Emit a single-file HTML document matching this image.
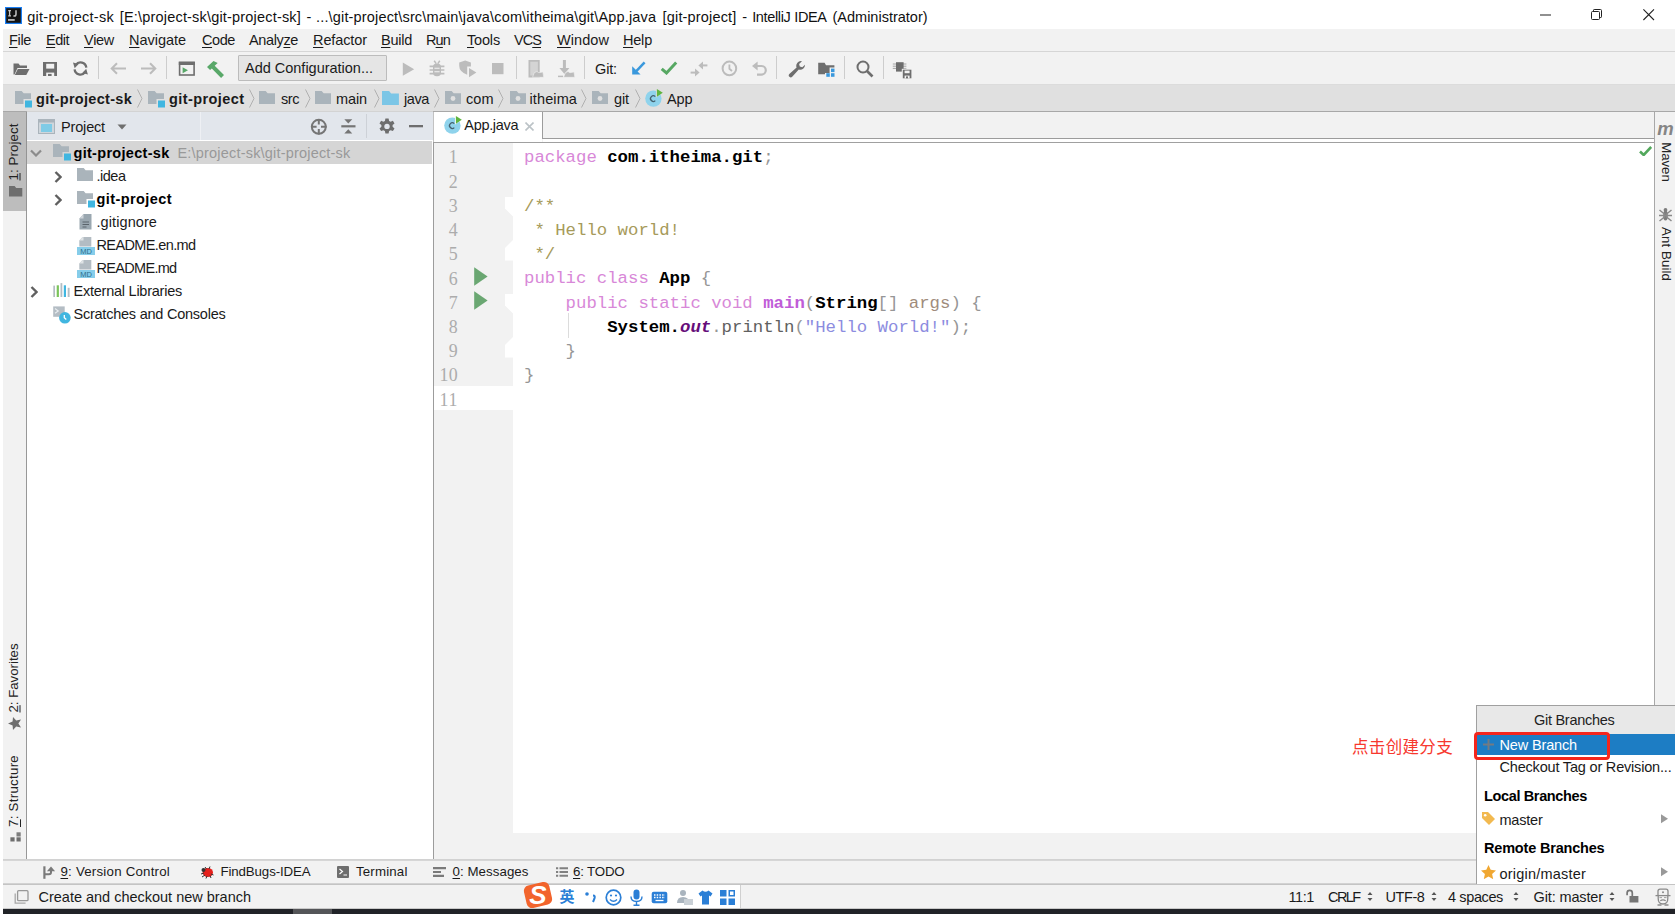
<!DOCTYPE html>
<html lang="zh"><head><meta charset="utf-8"><title>git-project-sk - IntelliJ IDEA</title>
<style>
html,body{margin:0;padding:0;}
body{width:1675px;height:914px;position:relative;overflow:hidden;background:#fff;font-family:'Liberation Sans','Noto Sans CJK SC',sans-serif;}
#app{position:absolute;left:0;top:0;width:1675px;height:914px;overflow:hidden;}
#app div,#app svg,#app span.t{position:absolute;display:block;}
#app div.sec{left:0;top:0;width:0;height:0;}
span.t{white-space:pre;line-height:20px;height:20px;}
u{text-decoration:underline;text-underline-offset:1.5px;text-decoration-thickness:1px;}
</style></head><body><div id="app">
<div class="sec" id="frame">
<div style="left:0px;top:0px;width:1675px;height:914px;background:#f2f2f2;"></div>
<div style="left:0px;top:0px;width:1675px;height:29px;background:#ffffff;"></div>
<div style="left:0px;top:0px;width:3px;height:914px;background:#ffffff;"></div>
<div style="left:3px;top:51px;width:1672px;height:1px;background:#d6d6d6;"></div>
<div style="left:3px;top:84px;width:1672px;height:1px;background:#dcdcdc;"></div>
<div style="left:3px;top:85px;width:1672px;height:26px;background:#e0e0e0;"></div>
<div style="left:3px;top:111px;width:1672px;height:1px;background:#a8a8a8;"></div>
<div style="left:27px;top:111px;width:406px;height:1px;background:#d3d3d3;"></div>
<div style="left:3px;top:112px;width:23px;height:748px;background:#f2f2f2;"></div>
<div style="left:3px;top:112px;width:23px;height:99px;background:#bdbdbd;"></div>
<div style="left:26px;top:112px;width:1px;height:748px;background:#989898;"></div>
<div style="left:26px;top:112px;width:1px;height:99px;background:#949494;"></div>
<div style="left:27px;top:112px;width:406px;height:28px;background:#e2e6ec;"></div>
<div style="left:200px;top:112px;width:1px;height:28px;background:#eef0f4;"></div>
<div style="left:27px;top:140px;width:406px;height:1px;background:#ffffff;"></div>
<div style="left:27px;top:141px;width:406px;height:719px;background:#ffffff;"></div>
<div style="left:27px;top:141px;width:406px;height:23px;background:#d5d5d5;"></div>
<div style="left:432px;top:141px;width:1px;height:23px;background:#ffffff;"></div>
<div style="left:433px;top:112px;width:1px;height:30px;background:#c2c2c2;"></div>
<div style="left:433px;top:142px;width:1px;height:718px;background:#9c9c9c;"></div>
<div style="left:434px;top:112px;width:1221px;height:27px;background:#f2f2f2;"></div>
<div style="left:434px;top:112px;width:108px;height:30px;background:#ffffff;"></div>
<div style="left:542px;top:112px;width:1px;height:27px;background:#9c9c9c;"></div>
<div style="left:542px;top:138px;width:1113px;height:1px;background:#9c9c9c;"></div>
<div style="left:543px;top:139px;width:1112px;height:3px;background:#ffffff;"></div>
<div style="left:434px;top:142px;width:1221px;height:1px;background:#a0a0a0;"></div>
<div style="left:434px;top:143px;width:79px;height:717px;background:#f2f2f2;"></div>
<div style="left:513px;top:143px;width:1141px;height:690px;background:#ffffff;"></div>
<div style="left:434px;top:386px;width:80px;height:24px;background:#ffffff;"></div>
<div style="left:1654px;top:112px;width:1px;height:748px;background:#a8a8a8;"></div>
<div style="left:1655px;top:112px;width:20px;height:748px;background:#f2f2f2;"></div>
<div style="left:3px;top:859px;width:1672px;height:1px;background:#d2d2d2;"></div>
<div style="left:3px;top:860px;width:1672px;height:1px;background:#d6d6d6;"></div>
<div style="left:3px;top:861px;width:1672px;height:22px;background:#f2f2f2;"></div>
<div style="left:3px;top:883px;width:1672px;height:1px;background:#d2d2d2;"></div>
<div style="left:3px;top:884px;width:1672px;height:1px;background:#c4c4c4;"></div>
<div style="left:3px;top:885px;width:1672px;height:24px;background:#f2f2f2;"></div>
<div style="left:3px;top:908px;width:1672px;height:1px;background:#c9c9c9;"></div>
<div style="left:3px;top:909px;width:1672px;height:5px;background:#212328;"></div>
<div style="left:293px;top:909px;width:39px;height:5px;background:#545558;"></div>
</div>
<div class="sec" id="titlebar">
<svg style="left:5px;top:7px;" width="17" height="17" viewBox="0 0 17 17"><rect width="17" height="17" fill="#1a7ff5"/><rect x="1.200" y="1.200" width="14.600" height="14.600" fill="#141414"/><rect x="3" y="12.200" width="6.700" height="1.500" fill="#d8d8d8"/><path d="M3.200 3.700h2.800M4.600 3.700v5.200M3.200 8.900h2.800" stroke="#c4c4c4" stroke-width="1.300" fill="none"/><path d="M11 3.200v4q0 1.800-1.700 1.800h-.9" stroke="#c4c4c4" stroke-width="1.500" fill="none"/></svg>
<span class="t" style="left:27.20px;top:6.50px;font-size:14.5px;color:#111;letter-spacing:0.271px;">git-project-sk</span>
<span class="t" style="left:119.80px;top:6.50px;font-size:14.5px;color:#111;letter-spacing:0.184px;">[E:\project-sk\git-project-sk]</span>
<span class="t" style="left:306.60px;top:6.50px;font-size:14.5px;color:#111;letter-spacing:-0.444px;">-</span>
<span class="t" style="left:316.00px;top:6.50px;font-size:14.5px;color:#111;letter-spacing:0.166px;">...\git-project\src\main\java\com\itheima\git\App.java</span>
<span class="t" style="left:662.60px;top:6.50px;font-size:14.5px;color:#111;letter-spacing:0.167px;">[git-project]</span>
<span class="t" style="left:742.20px;top:6.50px;font-size:14.5px;color:#111;letter-spacing:-0.544px;">-</span>
<span class="t" style="left:752.20px;top:6.50px;font-size:14.5px;color:#111;letter-spacing:-0.345px;">IntelliJ IDEA</span>
<span class="t" style="left:832.50px;top:6.50px;font-size:14.5px;color:#111;">(Administrator)</span>
<svg style="left:1540px;top:14px;" width="11" height="2" viewBox="0 0 11 2"><rect width="11" height="1" y="0.5" fill="#222"/></svg>
<svg style="left:1591px;top:9px;" width="11" height="11" viewBox="0 0 11 11"><path d="M2.500 2.500v-1.300q0-.700.700-.700h6.300q1 0 1 1v6.300q0 .700-.700.700h-1.300" fill="none" stroke="#222" stroke-width="1"/><rect x="0.500" y="2.500" width="8" height="8" rx="1" fill="none" stroke="#222" stroke-width="1"/></svg>
<svg style="left:1643px;top:9px;" width="11.5" height="11.5" viewBox="0 0 11.5 11.5"><path d="M0.400 0.400l10.600 10.600M11 0.400l-10.600 10.600" stroke="#222" stroke-width="1.100"/></svg>
</div>
<div class="sec" id="menubar">
<span class="t" style="left:9.00px;top:30.00px;font-size:14.5px;color:#1a1a1a;letter-spacing:-0.344px;"><u>F</u>ile</span>
<span class="t" style="left:46.00px;top:30.00px;font-size:14.5px;color:#1a1a1a;letter-spacing:-0.500px;"><u>E</u>dit</span>
<span class="t" style="left:84.00px;top:30.00px;font-size:14.5px;color:#1a1a1a;letter-spacing:-0.293px;"><u>V</u>iew</span>
<span class="t" style="left:129.00px;top:30.00px;font-size:14.5px;color:#1a1a1a;letter-spacing:-0.029px;"><u>N</u>avigate</span>
<span class="t" style="left:202.00px;top:30.00px;font-size:14.5px;color:#1a1a1a;letter-spacing:-0.418px;"><u>C</u>ode</span>
<span class="t" style="left:249.00px;top:30.00px;font-size:14.5px;color:#1a1a1a;letter-spacing:-0.371px;">Analy<u>z</u>e</span>
<span class="t" style="left:313.00px;top:30.00px;font-size:14.5px;color:#1a1a1a;letter-spacing:-0.102px;"><u>R</u>efactor</span>
<span class="t" style="left:381.00px;top:30.00px;font-size:14.5px;color:#1a1a1a;letter-spacing:-0.250px;"><u>B</u>uild</span>
<span class="t" style="left:426.00px;top:30.00px;font-size:14.5px;color:#1a1a1a;letter-spacing:-0.870px;">R<u>u</u>n</span>
<span class="t" style="left:467.00px;top:30.00px;font-size:14.5px;color:#1a1a1a;letter-spacing:-0.172px;"><u>T</u>ools</span>
<span class="t" style="left:514.00px;top:30.00px;font-size:14.5px;color:#1a1a1a;letter-spacing:-0.943px;">VC<u>S</u></span>
<span class="t" style="left:557.00px;top:30.00px;font-size:14.5px;color:#1a1a1a;letter-spacing:0.070px;"><u>W</u>indow</span>
<span class="t" style="left:623.00px;top:30.00px;font-size:14.5px;color:#1a1a1a;letter-spacing:-0.207px;"><u>H</u>elp</span>
</div>
<div class="sec" id="toolbar">
<svg style="left:13px;top:61px;" width="17" height="15" viewBox="0 0 17 15"><path d="M0.5 2.5h5l1.5 2h7v2.5h-9.5l-3 6.5h-1z" fill="#6e6e6e"/><path d="M4.8 8h11.7l-3.2 6h-11.5z" fill="#6e6e6e"/></svg>
<svg style="left:43px;top:61.5px;" width="14" height="14.5" viewBox="0 0 14 14.5"><rect width="14" height="14.200" fill="#6e6e6e"/><rect x="3.200" y="1.800" width="8" height="4.800" fill="#f2f2f2"/><rect x="3.200" y="10.600" width="8" height="3.600" fill="#f2f2f2"/><rect x="5" y="11.900" width="3.600" height="2.300" fill="#6e6e6e"/></svg>
<svg style="left:72px;top:60px;" width="17" height="17" viewBox="0 0 17 17"><path d="M14.300 7.600A5.800 5.800 0 0 0 3.800 4.900" fill="none" stroke="#6e6e6e" stroke-width="2.300"/><path d="M1 2.600l5.600 1.300-3.900 4.300z" fill="#6e6e6e"/><path d="M2.600 9.400A5.800 5.800 0 0 0 13.100 12.100" fill="none" stroke="#6e6e6e" stroke-width="2.300"/><path d="M15.900 14.400l-5.600-1.300 3.900-4.300z" fill="#6e6e6e"/></svg>
<div style="left:98px;top:56px;width:1px;height:23px;background:#cdcdcd;"></div>
<svg style="left:110px;top:62px;" width="17" height="13" viewBox="0 0 17 13"><path d="M16 6.500h-14M7 1.200l-5.300 5.300 5.300 5.300" fill="none" stroke="#bcbcbc" stroke-width="2"/></svg>
<svg style="left:140px;top:62px;" width="17" height="13" viewBox="0 0 17 13"><path d="M1 6.500h14M10 1.200l5.300 5.300-5.300 5.300" fill="none" stroke="#bcbcbc" stroke-width="2"/></svg>
<div style="left:166px;top:56px;width:1px;height:23px;background:#cdcdcd;"></div>
<svg style="left:178px;top:61px;" width="18" height="15" viewBox="0 0 18 15"><rect x="1.600" y="1.500" width="14.500" height="12.500" fill="none" stroke="#6e6e6e" stroke-width="1.600"/><rect x="0.800" y="0.700" width="16.100" height="3.300" fill="#6e6e6e"/><path d="M4.600 6.300l5.400 3-5.400 3z" fill="#59a869"/></svg>
<svg style="left:206px;top:60px;" width="20" height="18" viewBox="0 0 20 18"><path d="M1 7l6.500-6 4.200 2-3 2.800 9.300 9.300-2.900 2.800-9.300-9.400-1.700 1.500z" fill="#59a869"/></svg>
<div style="left:238px;top:55px;width:149px;height:26px;background:#e5e5e5;border:1px solid #bcbcbc;box-sizing:border-box;border-radius:1px;"></div>
<span class="t" style="left:245.00px;top:58.00px;font-size:14.5px;color:#1a1a1a;letter-spacing:-0.009px;">Add Configuration...</span>
<svg style="left:402px;top:61.5px;" width="13" height="14.5" viewBox="0 0 13 14.5"><path d="M0.800 0.600l11.400 6.600-11.400 6.600z" fill="#bcbcbc"/></svg>
<svg style="left:429px;top:60px;" width="16" height="18" viewBox="0 0 16 18"><rect x="4" y="3.600" width="8" height="12.600" rx="3.600" fill="#bcbcbc"/><path d="M0.600 6.400h14.800M0.600 10h14.800M0.600 13.600h14.800" stroke="#bcbcbc" stroke-width="1.600"/><path d="M5.200 0.800l2 2.800M10.800 0.800l-2 2.800" stroke="#bcbcbc" stroke-width="1.500"/><path d="M5.400 8.200h5.200M5.400 11.800h5.200" stroke="#f2f2f2" stroke-width="1.100"/></svg>
<svg style="left:459px;top:60px;" width="18" height="18" viewBox="0 0 18 18"><path d="M0.200 2.400l6-1.800 5.700 1.800v4.200h-3.700v8.200q-8-3-8-9z" fill="#bcbcbc"/><path d="M10 8l7.400 4.600-7.400 4.700z" fill="#bcbcbc"/></svg>
<svg style="left:492px;top:63px;" width="12" height="12" viewBox="0 0 12 12"><rect width="11.500" height="11.200" fill="#bcbcbc"/></svg>
<div style="left:516px;top:56px;width:1px;height:23px;background:#cdcdcd;"></div>
<svg style="left:528px;top:60px;" width="16" height="18" viewBox="0 0 16 18"><path d="M1.400 0.900h9.400v15.600h-9.400z" fill="#d4d4d4" stroke="#bcbcbc" stroke-width="1.800"/><path d="M4.500 17.300l1.800-4.600 2.600-1.200 2 1.200 4-.8.800 5.400z" fill="#bcbcbc" stroke="#f2f2f2" stroke-width="0.600"/></svg>
<svg style="left:557px;top:60px;" width="19" height="18" viewBox="0 0 19 18"><path d="M7.400 0v11" stroke="#bcbcbc" stroke-width="3"/><path d="M2.400 8l5 6 5-6z" fill="#bcbcbc"/><path d="M1 16.400h5" stroke="#bcbcbc" stroke-width="1.500"/><path d="M6.600 17.300l1.800-4.600 2.600-1.200 2 1.200 4-.8.800 5.400z" fill="#bcbcbc" stroke="#f2f2f2" stroke-width="0.600"/></svg>
<div style="left:584px;top:56px;width:1px;height:23px;background:#cdcdcd;"></div>
<span class="t" style="left:595.00px;top:58.50px;font-size:14.5px;color:#1a1a1a;letter-spacing:-0.141px;">Git:</span>
<svg style="left:631px;top:61px;" width="15" height="15" viewBox="0 0 15 15"><path d="M13.600 1.400l-9 9.400" fill="none" stroke="#3a98dc" stroke-width="2.500"/><path d="M1.200 5.200v8.400h8.400z" fill="#3a98dc"/></svg>
<svg style="left:660px;top:61px;" width="18" height="14" viewBox="0 0 18 14"><path d="M1.700 7.800l4.800 4.200 9.700-10.400" fill="none" stroke="#57a863" stroke-width="3"/></svg>
<svg style="left:690px;top:60px;" width="18" height="18" viewBox="0 0 18 18"><path d="M0.600 12.600h6.500" stroke="#bcbcbc" stroke-width="2"/><path d="M5 8.600l4.600 4-4.600 4z" fill="#bcbcbc"/><path d="M17.400 5.400h-6.500" stroke="#bcbcbc" stroke-width="2"/><path d="M13 1.400l-4.600 4 4.600 4z" fill="#bcbcbc"/></svg>
<svg style="left:721px;top:60px;" width="17" height="17" viewBox="0 0 17 17"><circle cx="8.400" cy="8.400" r="6.800" fill="none" stroke="#bcbcbc" stroke-width="2"/><path d="M8.400 4.600v4.200l2.600 2.200" fill="none" stroke="#bcbcbc" stroke-width="1.800"/></svg>
<svg style="left:751px;top:60px;" width="17" height="17" viewBox="0 0 17 17"><path d="M4 6h6.500a4.300 4.300 0 0 1 0 8.600h-4.500" fill="none" stroke="#bcbcbc" stroke-width="2.200"/><path d="M6.600 1.400l-5.600 4.600 5.600 4.600z" fill="#bcbcbc"/></svg>
<div style="left:776px;top:56px;width:1px;height:23px;background:#cdcdcd;"></div>
<svg style="left:788px;top:60px;" width="18" height="18" viewBox="0 0 18 18"><path d="M17 4.800a4.700 4.700 0 0 1-6.200 4.700l-6.600 7.200a1.900 1.900 0 0 1-2.900-2.600l7.300-6.600a4.700 4.700 0 0 1 5.400-6.300l-2.900 2.900.700 2.500 2.500.700z" fill="#6e6e6e"/></svg>
<svg style="left:818px;top:61px;" width="18" height="17" viewBox="0 0 18 17"><path d="M0.200 1.800h6.400l1.400 2.400h8.400v9h-16.200z" fill="#6e6e6e"/><path d="M11.600 6.400h6v11h-10.600v-5.400h4.600z" fill="#f2f2f2"/><rect x="13" y="7.600" width="3.500" height="3.500" fill="#3a98dc"/><rect x="8.300" y="12.200" width="3.500" height="3.600" fill="#3a98dc"/><rect x="13" y="12.200" width="3.500" height="3.600" fill="#3a98dc"/></svg>
<div style="left:844px;top:56px;width:1px;height:23px;background:#cdcdcd;"></div>
<svg style="left:856px;top:60px;" width="18" height="18" viewBox="0 0 18 18"><circle cx="7" cy="7" r="5.5" fill="none" stroke="#6e6e6e" stroke-width="2"/><path d="M11 11l5.5 5.5" stroke="#6e6e6e" stroke-width="2.6"/></svg>
<div style="left:883px;top:56px;width:1px;height:23px;background:#cdcdcd;"></div>
<svg style="left:892.2px;top:59.5px;" width="20" height="19" viewBox="0 0 20 19"><rect x="4" y="2.200" width="7.600" height="9.400" fill="#6e6e6e"/><path d="M0.800 4h13.600M0.800 6.200h13.600M0.800 8.400h13.600" stroke="#6e6e6e" stroke-width="0.900" opacity="0.650"/><path d="M9.800 8.800h10v10h-10z" fill="#f2f2f2"/><path d="M10.800 9.700h8.600v8.600h-8.600z" fill="#6e6e6e"/><rect x="12.600" y="10.600" width="5" height="2.600" fill="#f2f2f2"/><rect x="12.600" y="15.600" width="5" height="2.700" fill="#f2f2f2"/><rect x="14" y="16.400" width="2" height="1.900" fill="#6e6e6e"/></svg>
</div>
<div class="sec" id="navbar">
<svg style="left:15px;top:91px;" width="18" height="17" viewBox="0 0 18 17"><path d="M0 0h6.7l1.9 2.3h7.4v10.7h-16z" fill="#aab4bb" transform="translate(0,0)"/><rect x="8.5" y="8" width="9" height="9" fill="#e0e0e0"/><rect x="10" y="9.5" width="7" height="7" fill="#40b6e0"/></svg>
<span class="t" style="left:36.00px;top:88.50px;font-size:14.5px;color:#1a1a1a;font-weight:700;letter-spacing:0.297px;">git-project-sk</span>
<svg style="left:148px;top:91px;" width="18" height="17" viewBox="0 0 18 17"><path d="M0 0h6.7l1.9 2.3h7.4v10.7h-16z" fill="#aab4bb" transform="translate(0,0)"/><rect x="8.5" y="8" width="9" height="9" fill="#e0e0e0"/><rect x="10" y="9.5" width="7" height="7" fill="#40b6e0"/></svg>
<span class="t" style="left:169.00px;top:88.50px;font-size:14.5px;color:#1a1a1a;font-weight:700;letter-spacing:0.419px;">git-project</span>
<svg style="left:259px;top:91px;" width="16" height="13" viewBox="0 0 16 13"><path d="M0 0h6.7l1.9 2.3h7.4v10.7h-16z" fill="#aab4bb" transform="translate(0,0)"/></svg>
<span class="t" style="left:281.00px;top:88.50px;font-size:14.5px;color:#1a1a1a;letter-spacing:-0.448px;">src</span>
<svg style="left:315px;top:91px;" width="16" height="13" viewBox="0 0 16 13"><path d="M0 0h6.7l1.9 2.3h7.4v10.7h-16z" fill="#aab4bb" transform="translate(0,0)"/></svg>
<span class="t" style="left:336.00px;top:88.50px;font-size:14.5px;color:#1a1a1a;letter-spacing:-0.109px;">main</span>
<svg style="left:382px;top:91px;" width="17" height="14" viewBox="0 0 17 14"><path d="M0 0h7.1l2.0 2.5h7.8v11.5h-17z" fill="#7cc6e6" transform="translate(0,0)"/></svg>
<span class="t" style="left:404.00px;top:88.50px;font-size:14.5px;color:#1a1a1a;letter-spacing:-0.402px;">java</span>
<svg style="left:444.5px;top:91px;" width="16" height="13" viewBox="0 0 16 13"><path d="M0 0h6.7l1.9 2.3h7.4v10.7h-16z" fill="#aab4bb" transform="translate(0,0)"/><circle cx="8" cy="7.5" r="2.4" fill="#e0e0e0"/></svg>
<span class="t" style="left:466.00px;top:88.50px;font-size:14.5px;color:#1a1a1a;letter-spacing:0.031px;">com</span>
<svg style="left:510px;top:91px;" width="16" height="13" viewBox="0 0 16 13"><path d="M0 0h6.7l1.9 2.3h7.4v10.7h-16z" fill="#aab4bb" transform="translate(0,0)"/><circle cx="8" cy="7.5" r="2.4" fill="#e0e0e0"/></svg>
<span class="t" style="left:529.50px;top:88.50px;font-size:14.5px;color:#1a1a1a;letter-spacing:0.107px;">itheima</span>
<svg style="left:592px;top:91px;" width="16" height="13" viewBox="0 0 16 13"><path d="M0 0h6.7l1.9 2.3h7.4v10.7h-16z" fill="#aab4bb" transform="translate(0,0)"/><circle cx="8" cy="7.5" r="2.4" fill="#e0e0e0"/></svg>
<span class="t" style="left:614.00px;top:88.50px;font-size:14.5px;color:#1a1a1a;letter-spacing:-0.109px;">git</span>
<svg style="left:645px;top:89px;" width="19" height="18" viewBox="0 0 19 18"><circle cx="8.4" cy="9.6" r="8.2" fill="#8fd3ec"/><path d="M10.3 11.6a2.8 2.8 0 1 1 0-4" fill="none" stroke="#46626f" stroke-width="1.3"/><path d="M11 -1l7.600 4.600-7.600 5z" fill="#e0e0e0"/><path d="M11.900 0l5.900 3.700-5.900 4z" fill="#5fb540"/></svg>
<span class="t" style="left:667.00px;top:88.50px;font-size:14.5px;color:#1a1a1a;letter-spacing:-0.104px;">App</span>
<svg style="left:135.5px;top:89px;" width="8" height="19" viewBox="0 0 8 19"><path d="M1.5 0.5l4.5 9-4.5 9" fill="none" stroke="#b0b0b0" stroke-width="1"/></svg>
<svg style="left:248px;top:89px;" width="8" height="19" viewBox="0 0 8 19"><path d="M1.5 0.5l4.5 9-4.5 9" fill="none" stroke="#b0b0b0" stroke-width="1"/></svg>
<svg style="left:303.5px;top:89px;" width="8" height="19" viewBox="0 0 8 19"><path d="M1.5 0.5l4.5 9-4.5 9" fill="none" stroke="#b0b0b0" stroke-width="1"/></svg>
<svg style="left:372.5px;top:89px;" width="8" height="19" viewBox="0 0 8 19"><path d="M1.5 0.5l4.5 9-4.5 9" fill="none" stroke="#b0b0b0" stroke-width="1"/></svg>
<svg style="left:433px;top:89px;" width="8" height="19" viewBox="0 0 8 19"><path d="M1.5 0.5l4.5 9-4.5 9" fill="none" stroke="#b0b0b0" stroke-width="1"/></svg>
<svg style="left:497px;top:89px;" width="8" height="19" viewBox="0 0 8 19"><path d="M1.5 0.5l4.5 9-4.5 9" fill="none" stroke="#b0b0b0" stroke-width="1"/></svg>
<svg style="left:580px;top:89px;" width="8" height="19" viewBox="0 0 8 19"><path d="M1.5 0.5l4.5 9-4.5 9" fill="none" stroke="#b0b0b0" stroke-width="1"/></svg>
<svg style="left:634px;top:89px;" width="8" height="19" viewBox="0 0 8 19"><path d="M1.5 0.5l4.5 9-4.5 9" fill="none" stroke="#b0b0b0" stroke-width="1"/></svg>
</div>
<div class="sec" id="left-stripe">
<div style="left:-14.80px;top:141.50px;width:57.00px;height:20px;line-height:20px;font-size:13.3px;color:#222;white-space:pre;letter-spacing:0.083px;transform:rotate(-90deg);"><u>1</u>: Project</div>
<svg style="left:8.5px;top:186px;" width="14" height="11" viewBox="0 0 14 11"><path d="M0 0h5.6l1.6 1.9h6.1v8.6h-13.3z" fill="#6e6e6e" transform="translate(0,0)"/></svg>
<div style="left:-20.80px;top:667.50px;width:69.00px;height:20px;line-height:20px;font-size:13.3px;color:#222;white-space:pre;letter-spacing:-0.039px;transform:rotate(-90deg);"><u>2</u>: Favorites</div>
<svg style="left:8px;top:717px;" width="13" height="13" viewBox="0 0 13 13"><path d="M6.5 0l1.9 4.6 4.6.4-3.5 3.2 1.1 4.8-4.1-2.6-4.1 2.6 1.1-4.8-3.5-3.200 4.600-.4z" fill="#6e6e6e" transform="rotate(-90 6.5 6.5)"/></svg>
<div style="left:-22.30px;top:781.00px;width:72.00px;height:20px;line-height:20px;font-size:13.3px;color:#222;white-space:pre;letter-spacing:0.272px;transform:rotate(-90deg);"><u>7</u>: Structure</div>
<svg style="left:9.5px;top:832px;" width="11" height="10" viewBox="0 0 11 10"><rect x="6.500" y="0.300" width="4.200" height="4.200" fill="#7d7d7d"/><rect x="0.400" y="5.300" width="4.200" height="4.200" fill="#6e6e6e"/><rect x="6.500" y="5.300" width="4.200" height="4.200" fill="#6e6e6e"/></svg>
</div>
<div class="sec" id="project-header">
<svg style="left:38px;top:119px;" width="17" height="15" viewBox="0 0 17 15"><rect x="0.5" y="0.5" width="16" height="14" fill="#cfd6dc" stroke="#aab4bc"/><rect x="0.5" y="0.5" width="16" height="3" fill="#aab4bc"/><rect x="3" y="5" width="11" height="8" fill="#7fcbe6"/></svg>
<span class="t" style="left:61.00px;top:116.50px;font-size:14.5px;color:#1a1a1a;letter-spacing:-0.163px;">Project</span>
<svg style="left:116.5px;top:124px;" width="10" height="6" viewBox="0 0 10 6"><path d="M0.5 0.5h9l-4.500 5z" fill="#6e6e6e"/></svg>
<svg style="left:310px;top:117.5px;" width="17.5" height="17.5" viewBox="0 0 17.5 17.5"><circle cx="8.800" cy="8.800" r="7" fill="none" stroke="#757575" stroke-width="2"/><path d="M8.800 1v5.600M8.800 11v5.600M1 8.800h5.600M11 8.800h5.600" stroke="#757575" stroke-width="2"/></svg>
<svg style="left:341px;top:118px;" width="15" height="17" viewBox="0 0 15 17"><path d="M0.300 8.300h14.200" stroke="#757575" stroke-width="2.200"/><path d="M3.300 1.200h8l-4 4.400zM3.300 15.600h8l-4-4.400z" fill="#757575"/></svg>
<div style="left:366px;top:114px;width:1px;height:24px;background:#cdd1d7;"></div>
<svg style="left:379px;top:118px;" width="16" height="17" viewBox="0 0 16 17"><path d="M6.400 0.500h3.200l.5 2.400 1.500.800 2.300-.900 1.600 2.700-1.900 1.600v1.700l1.900 1.600-1.600 2.700-2.300-.900-1.500.800-.5 2.400h-3.200l-.5-2.400-1.500-.800-2.300.900-1.600-2.700 1.900-1.600v-1.700l-1.900-1.600 1.600-2.700 2.300.900 1.500-.800z" fill="#6e6e6e"/><circle cx="8" cy="8.400" r="2.700" fill="#e2e6ec"/></svg>
<svg style="left:409px;top:124.6px;" width="14" height="3" viewBox="0 0 14 3"><rect width="14" height="2.300" fill="#6e6e6e"/></svg>
</div>
<div class="sec" id="project-tree">
<svg style="left:30px;top:149px;" width="12" height="8" viewBox="0 0 12 8"><path d="M1 1.500l5 5 5-5" fill="none" stroke="#8c8c8c" stroke-width="2.200"/></svg>
<svg style="left:53px;top:144px;" width="18" height="17" viewBox="0 0 18 17"><path d="M0 0h6.7l1.9 2.3h7.4v10.7h-16z" fill="#aab4bb" transform="translate(0,0)"/><rect x="9.500" y="8" width="8.5" height="9" fill="#d5d5d5"/><rect x="11" y="9.500" width="7" height="7" fill="#40b6e0"/></svg>
<span class="t" style="left:73.50px;top:142.50px;font-size:14.5px;color:#000;font-weight:700;letter-spacing:0.297px;">git-project-sk</span>
<span class="t" style="left:177.50px;top:142.50px;font-size:14.5px;color:#999;letter-spacing:0.193px;">E:\project-sk\git-project-sk</span>
<svg style="left:54px;top:170.6px;" width="8" height="12" viewBox="0 0 8 12"><path d="M1.500 1l5 5-5 5" fill="none" stroke="#606060" stroke-width="2.400"/></svg>
<svg style="left:77px;top:168px;" width="16" height="13" viewBox="0 0 16 13"><path d="M0 0h6.7l1.9 2.3h7.4v10.7h-16z" fill="#aab4bb" transform="translate(0,0)"/></svg>
<span class="t" style="left:96.50px;top:165.50px;font-size:14.5px;color:#1a1a1a;letter-spacing:-0.491px;">.idea</span>
<svg style="left:54px;top:193.6px;" width="8" height="12" viewBox="0 0 8 12"><path d="M1.500 1l5 5-5 5" fill="none" stroke="#606060" stroke-width="2.400"/></svg>
<svg style="left:77px;top:191px;" width="18" height="17" viewBox="0 0 18 17"><path d="M0 0h6.7l1.9 2.3h7.4v10.7h-16z" fill="#aab4bb" transform="translate(0,0)"/><rect x="9.500" y="8" width="8.500" height="9" fill="#fff"/><rect x="11" y="9.500" width="7" height="7" fill="#40b6e0"/></svg>
<span class="t" style="left:96.50px;top:188.50px;font-size:14.5px;color:#000;font-weight:700;letter-spacing:0.419px;">git-project</span>
<svg style="left:79px;top:214px;" width="13" height="16" viewBox="0 0 13 16"><path d="M4.500 0h8v15.500h-12v-11z" fill="#9aa7b0"/><path d="M0.500 4.500l4-4.500v4.500z" fill="#cfd5da"/><path d="M3.500 8h6.500M3.500 10.500h6.500M3.500 13h4" stroke="#5a646c" stroke-width="1"/></svg>
<span class="t" style="left:96.50px;top:211.50px;font-size:14.5px;color:#1a1a1a;letter-spacing:0.084px;">.gitignore</span>
<svg style="left:77px;top:237px;" width="18" height="18" viewBox="0 0 18 18"><path d="M6.500 -1h7.800v10.500h-12v-6z" fill="#b3bcc3"/><path d="M2.300 3.500l4.200-4.500v4.500z" fill="#dfe3e6"/><rect x="0" y="10" width="18" height="8.200" fill="#86cdea"/><text x="9" y="17" font-size="7.500" font-weight="400" text-anchor="middle" fill="#2f6f8c" font-family="Liberation Sans,sans-serif">MD</text></svg>
<span class="t" style="left:96.50px;top:234.50px;font-size:14.5px;color:#1a1a1a;letter-spacing:-0.615px;">README.en.md</span>
<svg style="left:77px;top:260px;" width="18" height="18" viewBox="0 0 18 18"><path d="M6.500 -1h7.800v10.500h-12v-6z" fill="#b3bcc3"/><path d="M2.300 3.500l4.200-4.500v4.500z" fill="#dfe3e6"/><rect x="0" y="10" width="18" height="8.200" fill="#86cdea"/><text x="9" y="17" font-size="7.500" font-weight="400" text-anchor="middle" fill="#2f6f8c" font-family="Liberation Sans,sans-serif">MD</text></svg>
<span class="t" style="left:96.50px;top:257.50px;font-size:14.5px;color:#1a1a1a;letter-spacing:-0.691px;">README.md</span>
<svg style="left:30.3px;top:285.6px;" width="8" height="12" viewBox="0 0 8 12"><path d="M1.500 1l5 5-5 5" fill="none" stroke="#606060" stroke-width="2.400"/></svg>
<svg style="left:53px;top:283px;" width="17" height="14.5" viewBox="0 0 17 14.5"><rect x="0.300" y="2.600" width="1.700" height="11.400" fill="#b4bdc3"/><rect x="3.700" y="2.300" width="2.200" height="11.700" fill="#7bc45a"/><rect x="7.500" y="0.100" width="1.800" height="13.900" fill="#b4bdc3"/><rect x="10.800" y="2.300" width="2.200" height="11.700" fill="#40b6e0"/><rect x="14.700" y="4.800" width="1.900" height="9.200" fill="#b4bdc3"/></svg>
<span class="t" style="left:73.50px;top:280.50px;font-size:14.5px;color:#1a1a1a;letter-spacing:-0.240px;">External Libraries</span>
<svg style="left:53px;top:306px;" width="18" height="18" viewBox="0 0 18 18"><path d="M0.200 0.400h11.500v10.400h-11.500z" fill="#b4bdc4"/><path d="M2 2.600l3.200 2.300-3.200 2.300" fill="none" stroke="#e8ecef" stroke-width="1.200"/><circle cx="11.900" cy="11.800" r="5.800" fill="#40b6e0"/><path d="M11.300 9v2.800l2 1.800" fill="none" stroke="#fff" stroke-width="1.300"/></svg>
<span class="t" style="left:73.50px;top:303.50px;font-size:14.5px;color:#1a1a1a;letter-spacing:-0.235px;">Scratches and Consoles</span>
</div>
<div class="sec" id="editor-tabs">
<svg style="left:444.4px;top:116px;" width="19" height="18" viewBox="0 0 19 18"><circle cx="8.4" cy="9.6" r="8.2" fill="#8fd3ec"/><path d="M10.3 11.6a2.8 2.8 0 1 1 0-4" fill="none" stroke="#46626f" stroke-width="1.3"/><path d="M11 -1l7.600 4.600-7.600 5z" fill="#fff"/><path d="M11.900 0l5.900 3.700-5.900 4z" fill="#5fb540"/></svg>
<span class="t" style="left:464.30px;top:114.70px;font-size:14.5px;color:#1a1a1a;letter-spacing:-0.317px;">App.java</span>
<svg style="left:525.2px;top:121.8px;" width="9" height="9" viewBox="0 0 9 9"><path d="M0.500 0.500l8 8M8.500 0.500l-8 8" stroke="#bcc3c7" stroke-width="1.600"/></svg>
</div>
<div class="sec" id="editor">
<span class="t" style="left:448.80px;top:147.30px;font-size:17.9px;color:#acacac;font-family:'Liberation Serif',serif;letter-spacing:0.347px;">1</span>
<span class="t" style="left:448.80px;top:171.54px;font-size:17.9px;color:#acacac;font-family:'Liberation Serif',serif;letter-spacing:0.347px;">2</span>
<span class="t" style="left:448.80px;top:195.78px;font-size:17.9px;color:#acacac;font-family:'Liberation Serif',serif;letter-spacing:0.347px;">3</span>
<span class="t" style="left:448.80px;top:220.02px;font-size:17.9px;color:#acacac;font-family:'Liberation Serif',serif;letter-spacing:0.347px;">4</span>
<span class="t" style="left:448.80px;top:244.26px;font-size:17.9px;color:#acacac;font-family:'Liberation Serif',serif;letter-spacing:0.347px;">5</span>
<span class="t" style="left:448.80px;top:268.50px;font-size:17.9px;color:#acacac;font-family:'Liberation Serif',serif;letter-spacing:0.347px;">6</span>
<span class="t" style="left:448.80px;top:292.74px;font-size:17.9px;color:#acacac;font-family:'Liberation Serif',serif;letter-spacing:0.347px;">7</span>
<span class="t" style="left:448.80px;top:316.98px;font-size:17.9px;color:#acacac;font-family:'Liberation Serif',serif;letter-spacing:0.347px;">8</span>
<span class="t" style="left:448.80px;top:341.22px;font-size:17.9px;color:#acacac;font-family:'Liberation Serif',serif;letter-spacing:0.347px;">9</span>
<span class="t" style="left:439.50px;top:365.46px;font-size:17.9px;color:#acacac;font-family:'Liberation Serif',serif;letter-spacing:0.355px;">10</span>
<span class="t" style="left:439.50px;top:389.70px;font-size:17.9px;color:#acacac;font-family:'Liberation Serif',serif;letter-spacing:0.683px;">11</span>
<span class="t" style="left:524.00px;top:148.20px;font-size:17.33px;color:#d888d8;font-family:'Liberation Mono','Noto Sans CJK SC',monospace;">package</span>
<span class="t" style="left:607.20px;top:148.20px;font-size:17.33px;color:#000;font-weight:700;font-family:'Liberation Mono','Noto Sans CJK SC',monospace;">com.itheima.git</span>
<span class="t" style="left:763.20px;top:148.20px;font-size:17.33px;color:#969696;font-family:'Liberation Mono','Noto Sans CJK SC',monospace;letter-spacing:-0.006px;">;</span>
<span class="t" style="left:524.00px;top:196.68px;font-size:17.33px;color:#a69a5a;font-family:'Liberation Mono','Noto Sans CJK SC',monospace;">/**</span>
<span class="t" style="left:524.00px;top:220.92px;font-size:17.33px;color:#a69a5a;font-family:'Liberation Mono','Noto Sans CJK SC',monospace;"> * Hello world!</span>
<span class="t" style="left:524.00px;top:245.16px;font-size:17.33px;color:#a69a5a;font-family:'Liberation Mono','Noto Sans CJK SC',monospace;"> */</span>
<span class="t" style="left:524.00px;top:269.40px;font-size:17.33px;color:#d888d8;font-family:'Liberation Mono','Noto Sans CJK SC',monospace;">public class</span>
<span class="t" style="left:659.20px;top:269.40px;font-size:17.33px;color:#000;font-weight:700;font-family:'Liberation Mono','Noto Sans CJK SC',monospace;">App</span>
<span class="t" style="left:700.80px;top:269.40px;font-size:17.33px;color:#969696;font-family:'Liberation Mono','Noto Sans CJK SC',monospace;letter-spacing:-0.006px;">{</span>
<span class="t" style="left:565.60px;top:293.64px;font-size:17.33px;color:#d888d8;font-family:'Liberation Mono','Noto Sans CJK SC',monospace;">public static void</span>
<span class="t" style="left:763.20px;top:293.64px;font-size:17.33px;color:#c05cd8;font-weight:700;font-family:'Liberation Mono','Noto Sans CJK SC',monospace;">main</span>
<span class="t" style="left:804.80px;top:293.64px;font-size:17.33px;color:#969696;font-family:'Liberation Mono','Noto Sans CJK SC',monospace;letter-spacing:-0.006px;">(</span>
<span class="t" style="left:815.20px;top:293.64px;font-size:17.33px;color:#000;font-weight:700;font-family:'Liberation Mono','Noto Sans CJK SC',monospace;">String</span>
<span class="t" style="left:877.60px;top:293.64px;font-size:17.33px;color:#969696;font-family:'Liberation Mono','Noto Sans CJK SC',monospace;letter-spacing:-0.006px;">[]</span>
<span class="t" style="left:908.80px;top:293.64px;font-size:17.33px;color:#a08c7c;font-family:'Liberation Mono','Noto Sans CJK SC',monospace;">args</span>
<span class="t" style="left:950.40px;top:293.64px;font-size:17.33px;color:#969696;font-family:'Liberation Mono','Noto Sans CJK SC',monospace;letter-spacing:-0.006px;">)</span>
<span class="t" style="left:971.20px;top:293.64px;font-size:17.33px;color:#969696;font-family:'Liberation Mono','Noto Sans CJK SC',monospace;letter-spacing:-0.006px;">{</span>
<span class="t" style="left:607.20px;top:317.88px;font-size:17.33px;color:#000;font-weight:700;font-family:'Liberation Mono','Noto Sans CJK SC',monospace;">System</span>
<span class="t" style="left:669.60px;top:317.88px;font-size:17.33px;color:#000;font-weight:700;font-family:'Liberation Mono','Noto Sans CJK SC',monospace;letter-spacing:-0.006px;">.</span>
<span class="t" style="left:680.00px;top:317.88px;font-size:17.33px;color:#660e7a;font-weight:700;font-style:italic;font-family:'Liberation Mono','Noto Sans CJK SC',monospace;">out</span>
<span class="t" style="left:711.20px;top:317.88px;font-size:17.33px;color:#969696;font-family:'Liberation Mono','Noto Sans CJK SC',monospace;letter-spacing:-0.006px;">.</span>
<span class="t" style="left:721.60px;top:317.88px;font-size:17.33px;color:#606060;font-family:'Liberation Mono','Noto Sans CJK SC',monospace;">println</span>
<span class="t" style="left:794.40px;top:317.88px;font-size:17.33px;color:#969696;font-family:'Liberation Mono','Noto Sans CJK SC',monospace;letter-spacing:-0.006px;">(</span>
<span class="t" style="left:804.80px;top:317.88px;font-size:17.33px;color:#8c8ce0;font-family:'Liberation Mono','Noto Sans CJK SC',monospace;">&quot;Hello World!&quot;</span>
<span class="t" style="left:950.40px;top:317.88px;font-size:17.33px;color:#969696;font-family:'Liberation Mono','Noto Sans CJK SC',monospace;letter-spacing:-0.006px;">);</span>
<span class="t" style="left:565.60px;top:342.12px;font-size:17.33px;color:#969696;font-family:'Liberation Mono','Noto Sans CJK SC',monospace;letter-spacing:-0.006px;">}</span>
<span class="t" style="left:524.00px;top:366.36px;font-size:17.33px;color:#969696;font-family:'Liberation Mono','Noto Sans CJK SC',monospace;letter-spacing:-0.006px;">}</span>
<svg style="left:474px;top:266.5px;" width="14" height="19" viewBox="0 0 14 19"><path d="M0.2 0.3l13.4 9.200-13.400 9.200z" fill="#6aa772"/></svg>
<svg style="left:474px;top:290.6px;" width="14" height="19" viewBox="0 0 14 19"><path d="M0.2 0.3l13.4 9.200-13.400 9.200z" fill="#6aa772"/></svg>
<svg style="left:505px;top:197.07999999999998px;" width="8" height="20" viewBox="0 0 8 20"><path d="M0 0h8v19.400l-8-8z" fill="#fff"/></svg>
<svg style="left:505px;top:239.95999999999998px;" width="8" height="21" viewBox="0 0 8 21"><path d="M0 20.600h8v-20.600l-8 8z" fill="#fff"/></svg>
<svg style="left:505px;top:294.04px;" width="8" height="20" viewBox="0 0 8 20"><path d="M0 0h8v19.400l-8-8z" fill="#fff"/></svg>
<svg style="left:505px;top:336.91999999999996px;" width="8" height="21" viewBox="0 0 8 21"><path d="M0 20.600h8v-20.600l-8 8z" fill="#fff"/></svg>
<div style="left:568px;top:313px;width:1px;height:25px;background:#dcdcdc;"></div>
<svg style="left:1639px;top:145.5px;" width="13" height="10.5" viewBox="0 0 13 10.5"><path d="M1 5.500l3.700 3.500 7.500-8" fill="none" stroke="#52a85c" stroke-width="2.600"/></svg>
</div>
<div class="sec" id="right-stripe">
<div style="left:1657px;top:119px;width:17px;height:20px;line-height:20px;font-size:18.500px;font-weight:700;font-style:italic;color:#858585;text-align:center;">m</div>
<div style="left:1646.25px;top:152.25px;width:39.50px;height:20px;line-height:20px;font-size:13.3px;color:#222;white-space:pre;letter-spacing:-0.084px;transform:rotate(90deg);">Maven</div>
<svg style="left:1659px;top:207px;" width="13" height="15" viewBox="0 0 13 15"><ellipse cx="6.500" cy="8.500" rx="2.300" ry="5" fill="#7d7d7d"/><circle cx="6.500" cy="3" r="1.900" fill="#7d7d7d"/><path d="M0.500 3l5.500 4.500M12.500 3l-5.500 4.500M0 8.500h13M0.500 14l5.500-4.500M12.500 14l-5.500-4.500" stroke="#8a8a8a" stroke-width="1.500"/></svg>
<div style="left:1639.00px;top:244.00px;width:54.00px;height:20px;line-height:20px;font-size:13.3px;color:#222;white-space:pre;letter-spacing:0.085px;transform:rotate(90deg);">Ant Build</div>
</div>
<div class="sec" id="tool-stripe">
<svg style="left:42.8px;top:866px;" width="13" height="13" viewBox="0 0 13 13"><path d="M1.400 0.300v12.500" stroke="#7a7a7a" stroke-width="2.200"/><path d="M1.400 8.300h4.600q2 0 2-2v-2.300" fill="none" stroke="#7a7a7a" stroke-width="2"/><path d="M3.900 5.200l4.100-4.800 4.100 4.800z" fill="#7a7a7a"/></svg>
<span class="t" style="left:60.50px;top:862.00px;font-size:13.3px;color:#1a1a1a;letter-spacing:0.211px;"><u>9</u>: Version Control</span>
<svg style="left:200px;top:865px;" width="14" height="14" viewBox="0 0 14 14"><ellipse cx="7.800" cy="7.500" rx="5.200" ry="4.600" fill="#e6201c"/><circle cx="3.500" cy="5" r="2" fill="#333"/><path d="M1 9l3-1M2 12l3-2M6 13.500l1-2.500M11 13l-1-2.500M13.500 10l-2.500-1M5 2l1.500 2M10 1.500l-1 2.500" stroke="#333" stroke-width="1"/></svg>
<span class="t" style="left:220.50px;top:862.00px;font-size:13.3px;color:#1a1a1a;letter-spacing:-0.126px;">FindBugs-IDEA</span>
<svg style="left:337px;top:866px;" width="12" height="12" viewBox="0 0 12 12"><rect width="12" height="12" rx="1" fill="#6e6e6e"/><path d="M2.500 3l3 2.500-3 2.500M6.500 9h3.500" fill="none" stroke="#fff" stroke-width="1.200"/></svg>
<span class="t" style="left:356.00px;top:862.00px;font-size:13.3px;color:#1a1a1a;letter-spacing:0.156px;">Terminal</span>
<svg style="left:433px;top:867px;" width="13" height="10" viewBox="0 0 13 10"><path d="M0 1.200h13M0 5h8M0 8.800h11" stroke="#7a7a7a" stroke-width="2.200"/></svg>
<span class="t" style="left:452.50px;top:862.00px;font-size:13.3px;color:#1a1a1a;letter-spacing:0.055px;"><u>0</u>: Messages</span>
<svg style="left:556px;top:867px;" width="12" height="10" viewBox="0 0 12 10"><path d="M3.500 1.200h8.500M3.500 5h8.500M3.500 8.800h8.500" stroke="#808080" stroke-width="2.100"/><path d="M0 1.200h2.200M0 5h2.200M0 8.800h2.200" stroke="#808080" stroke-width="2.100"/></svg>
<span class="t" style="left:573.00px;top:862.00px;font-size:13.3px;color:#1a1a1a;letter-spacing:-0.174px;"><u>6</u>: TODO</span>
</div>
<div class="sec" id="statusbar">
<svg style="left:14px;top:889.5px;" width="15" height="15" viewBox="0 0 15 15"><rect x="3.600" y="0.700" width="10.400" height="10" rx="1" fill="#f2f2f2" stroke="#989898" stroke-width="1.300"/><path d="M1.200 3.600v9.600h10.400" fill="none" stroke="#a8a8a8" stroke-width="1.300"/></svg>
<span class="t" style="left:38.50px;top:886.70px;font-size:14.5px;color:#1a1a1a;letter-spacing:-0.010px;">Create and checkout new branch</span>
<span class="t" style="left:1288.50px;top:886.70px;font-size:14.5px;color:#1a1a1a;letter-spacing:-0.414px;">11:1</span>
<span class="t" style="left:1328.00px;top:886.70px;font-size:14.5px;color:#1a1a1a;letter-spacing:-1.594px;">CRLF</span>
<span class="t" style="left:1385.50px;top:886.70px;font-size:14.5px;color:#1a1a1a;letter-spacing:-0.419px;">UTF-8</span>
<span class="t" style="left:1448.00px;top:886.70px;font-size:14.5px;color:#1a1a1a;letter-spacing:-0.381px;">4 spaces</span>
<span class="t" style="left:1533.50px;top:886.70px;font-size:14.5px;color:#1a1a1a;letter-spacing:-0.128px;">Git: master</span>
<svg style="left:1366.5px;top:891.2px;" width="6" height="11" viewBox="0 0 6 11"><path d="M0.500 4l2.500-3 2.500 3zM0.500 7l2.500 3 2.500-3z" fill="#555"/></svg>
<svg style="left:1430.5px;top:891.2px;" width="6" height="11" viewBox="0 0 6 11"><path d="M0.500 4l2.500-3 2.500 3zM0.500 7l2.500 3 2.500-3z" fill="#555"/></svg>
<svg style="left:1513px;top:891.2px;" width="6" height="11" viewBox="0 0 6 11"><path d="M0.500 4l2.500-3 2.500 3zM0.500 7l2.500 3 2.500-3z" fill="#555"/></svg>
<svg style="left:1609px;top:891.2px;" width="6" height="11" viewBox="0 0 6 11"><path d="M0.500 4l2.500-3 2.500 3zM0.500 7l2.500 3 2.500-3z" fill="#555"/></svg>
<svg style="left:1625px;top:889px;" width="14" height="14" viewBox="0 0 14 14"><path d="M2.100 6.200v-2.300a2.600 2.600 0 0 1 5.200 0v3" fill="none" stroke="#757575" stroke-width="1.700"/><rect x="4.500" y="7" width="8.900" height="6.500" fill="#757575"/></svg>
<svg style="left:1654.5px;top:888px;" width="16" height="18" viewBox="0 0 16 18"><path d="M3 7.500v-4.300q0-2 2-2h6q2 0 2 2v4.300" fill="none" stroke="#8a8a8a" stroke-width="1.300"/><circle cx="8" cy="4.200" r="1" fill="#8a8a8a"/><path d="M0.500 7.600h15" stroke="#8a8a8a" stroke-width="1.300"/><path d="M3.200 8v2.500q0 5.500 4.800 5.500t4.800-5.500v-2.500" fill="none" stroke="#8a8a8a" stroke-width="1.300"/><path d="M4.500 9.600h2.500M9 9.600h2.500" stroke="#a0a0a0" stroke-width="1"/><path d="M5.300 12.800q2.700-2 5.400 0" fill="none" stroke="#8a8a8a" stroke-width="1.300"/><path d="M2.500 17h4M9.500 17h4" stroke="#8a8a8a" stroke-width="1.600"/></svg>
</div>
<div class="sec" id="ime-bar">
<div style="left:540px;top:885px;width:200px;height:23px;background:#ffffff;"></div>
<div style="left:740px;top:885px;width:1px;height:23px;background:#d0d0d0;"></div>
<svg style="left:520px;top:879px;" width="36" height="32" viewBox="0 0 36 32"><rect x="5" y="4.500" width="26" height="23" rx="5.500" fill="#f2642c" transform="rotate(-13 18 16)"/><text x="18" y="25.400" font-size="26" font-weight="700" font-style="italic" text-anchor="middle" fill="#fff" font-family="Liberation Sans,sans-serif">S</text></svg>
<span class="t" style="left:559.50px;top:886.70px;font-size:15px;color:#2b7fd6;font-weight:700;letter-spacing:0.484px;">英</span>
<svg style="left:584px;top:890px;" width="13" height="13" viewBox="0 0 13 13"><circle cx="3" cy="4" r="1.800" fill="#2b7fd6"/><path d="M9 5.500q2.500 0 1.500 3l-1.500 3.500" fill="none" stroke="#2b7fd6" stroke-width="2"/></svg>
<svg style="left:605px;top:889px;" width="17" height="17" viewBox="0 0 17 17"><circle cx="8.500" cy="8.500" r="7.300" fill="none" stroke="#2b7fd6" stroke-width="1.700"/><circle cx="6" cy="6.500" r="1.100" fill="#2b7fd6"/><circle cx="11" cy="6.500" r="1.100" fill="#2b7fd6"/><path d="M5 10.500q3.500 3.500 7 0" fill="none" stroke="#2b7fd6" stroke-width="1.400"/></svg>
<svg style="left:630px;top:889px;" width="13" height="17" viewBox="0 0 13 17"><rect x="3.500" y="0.500" width="6" height="10" rx="3" fill="#2b7fd6"/><path d="M1 7.500q0 5 5.500 5t5.500-5M6.500 12.500v4M3.500 16.300h6" fill="none" stroke="#2b7fd6" stroke-width="1.400"/></svg>
<svg style="left:651px;top:891px;" width="17" height="13" viewBox="0 0 17 13"><rect x="0.700" y="0.700" width="15.600" height="11.600" rx="2" fill="#2b7fd6"/><path d="M3 4h11M3 6.500h11" stroke="#fff" stroke-width="1.300" stroke-dasharray="1.500 1.200"/><path d="M4.500 9.500h8" stroke="#fff" stroke-width="1.300"/></svg>
<svg style="left:676px;top:889px;" width="17" height="17" viewBox="0 0 17 17"><circle cx="7" cy="4" r="3" fill="#a9b4be"/><path d="M1 14q0-6 6-6t6 6z" fill="#a9b4be"/><rect x="8" y="10" width="9" height="6" fill="#c9d0d6"/></svg>
<svg style="left:698px;top:890px;" width="15" height="15" viewBox="0 0 15 15"><path d="M4.500 0.500q3 2.500 6 0l4 3-2 3-1.500-1v9h-7v-9l-1.500 1-2-3z" fill="#2b7fd6"/></svg>
<svg style="left:720px;top:890px;" width="15" height="15" viewBox="0 0 15 15"><rect x="0" y="0" width="6.500" height="6.500" fill="#2b7fd6"/><rect x="8.500" y="0" width="6.500" height="6.500" fill="#2b7fd6"/><rect x="0" y="8.500" width="6.500" height="6.500" fill="#2b7fd6"/><rect x="8.500" y="8.500" width="6.500" height="6.500" fill="#2b7fd6"/><rect x="10" y="1.500" width="3.500" height="3.500" fill="#fff"/></svg>
</div>
<div class="sec" id="branches-popup">
<span class="t" style="left:1352.00px;top:737.00px;font-size:16.5px;color:#f7382e;letter-spacing:0.333px;">点击创建分支</span>
<div style="left:1476px;top:705px;width:199px;height:179px;background:#ffffff;border-left:1px solid #a0a0a0;border-top:1px solid #a0a0a0;box-sizing:border-box;"></div>
<div style="left:1477px;top:706px;width:198px;height:28px;background:#e8e8e8;"></div>
<span class="t" style="left:1534.00px;top:710.00px;font-size:14.5px;color:#222;letter-spacing:-0.277px;">Git Branches</span>
<div style="left:1477px;top:734px;width:198px;height:21px;background:#1d7dc4;"></div>
<svg style="left:1483px;top:739px;" width="11" height="11" viewBox="0 0 11 11"><path d="M5.500 0v11M0 5.500h11" stroke="#737b82" stroke-width="2"/></svg>
<span class="t" style="left:1499.50px;top:734.50px;font-size:14.5px;color:#fff;letter-spacing:-0.148px;">New Branch</span>
<span class="t" style="left:1499.50px;top:757.00px;font-size:14.5px;color:#1a1a1a;letter-spacing:-0.187px;">Checkout Tag or Revision...</span>
<span class="t" style="left:1484.00px;top:785.50px;font-size:14.5px;color:#000;font-weight:700;letter-spacing:-0.357px;">Local Branches</span>
<svg style="left:1481px;top:811px;" width="15" height="15" viewBox="0 0 15 15"><path d="M1 1h6l7 7-6 6-7-7z" fill="#f2b950" transform="rotate(0)"/><circle cx="4.200" cy="4.200" r="1.300" fill="#fff"/></svg>
<span class="t" style="left:1499.50px;top:810.00px;font-size:14.5px;color:#1a1a1a;letter-spacing:-0.221px;">master</span>
<svg style="left:1661px;top:814.3px;" width="7" height="10" viewBox="0 0 7 10"><path d="M0 0.300l7 4.500-7 4.500z" fill="#999"/></svg>
<span class="t" style="left:1484.00px;top:838.00px;font-size:14.5px;color:#000;font-weight:700;letter-spacing:-0.186px;">Remote Branches</span>
<svg style="left:1481px;top:864.5px;" width="15" height="14" viewBox="0 0 15 14"><path d="M7.500 0l2.200 4.800 5.300.600-3.900 3.600 1.100 5.200-4.700-2.700-4.700 2.700 1.100-5.200-3.900-3.600 5.300-.600z" fill="#f0a732"/></svg>
<span class="t" style="left:1499.50px;top:863.50px;font-size:14.5px;color:#1a1a1a;letter-spacing:0.207px;">origin/master</span>
<svg style="left:1661px;top:866.5px;" width="7" height="10" viewBox="0 0 7 10"><path d="M0 0.300l7 4.500-7 4.500z" fill="#999"/></svg>
<div style="left:1474px;top:732px;width:136px;height:28px;border:3px solid #f5261c;border-radius:4px;box-sizing:border-box;"></div>
</div>
</div></body></html>
